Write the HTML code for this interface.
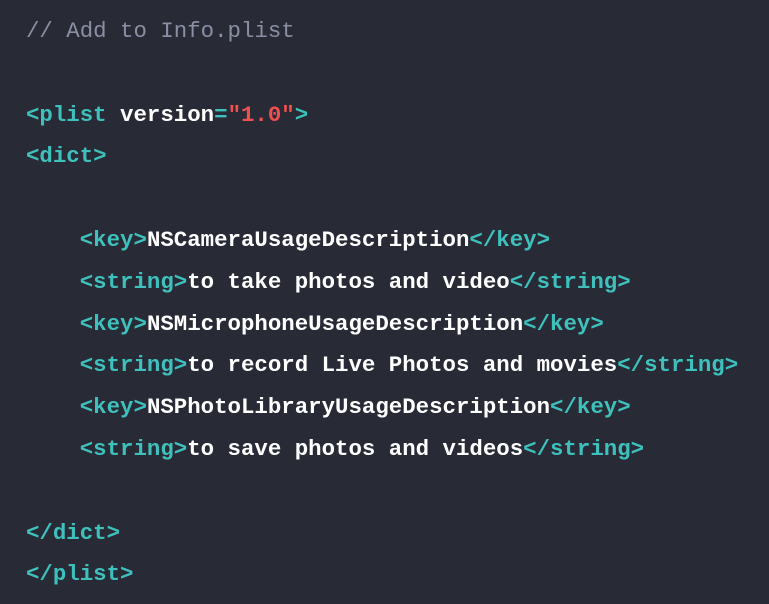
<!DOCTYPE html>
<html><head><style>
html,body{margin:0;padding:0;background:#282a36;width:769px;height:604px;overflow:hidden}
pre{margin:0;padding:11px 0 0 26px;font-family:"Liberation Mono",monospace;font-size:22.4px;line-height:41.8px;color:#ffffff;font-weight:bold;-webkit-font-smoothing:antialiased}
.c{color:#8b8fa3;font-weight:normal}
.t{color:#3ec1bd}
.s{color:#f0514f}
</style></head><body><pre><span class="c">// Add to Info.plist</span>

<span class="t">&lt;plist</span> version<span class="t">=</span><span class="s">"1.0"</span><span class="t">&gt;</span>
<span class="t">&lt;dict&gt;</span>

    <span class="t">&lt;key&gt;</span>NSCameraUsageDescription<span class="t">&lt;/key&gt;</span>
    <span class="t">&lt;string&gt;</span>to take photos and video<span class="t">&lt;/string&gt;</span>
    <span class="t">&lt;key&gt;</span>NSMicrophoneUsageDescription<span class="t">&lt;/key&gt;</span>
    <span class="t">&lt;string&gt;</span>to record Live Photos and movies<span class="t">&lt;/string&gt;</span>
    <span class="t">&lt;key&gt;</span>NSPhotoLibraryUsageDescription<span class="t">&lt;/key&gt;</span>
    <span class="t">&lt;string&gt;</span>to save photos and videos<span class="t">&lt;/string&gt;</span>

<span class="t">&lt;/dict&gt;</span>
<span class="t">&lt;/plist&gt;</span></pre></body></html>
